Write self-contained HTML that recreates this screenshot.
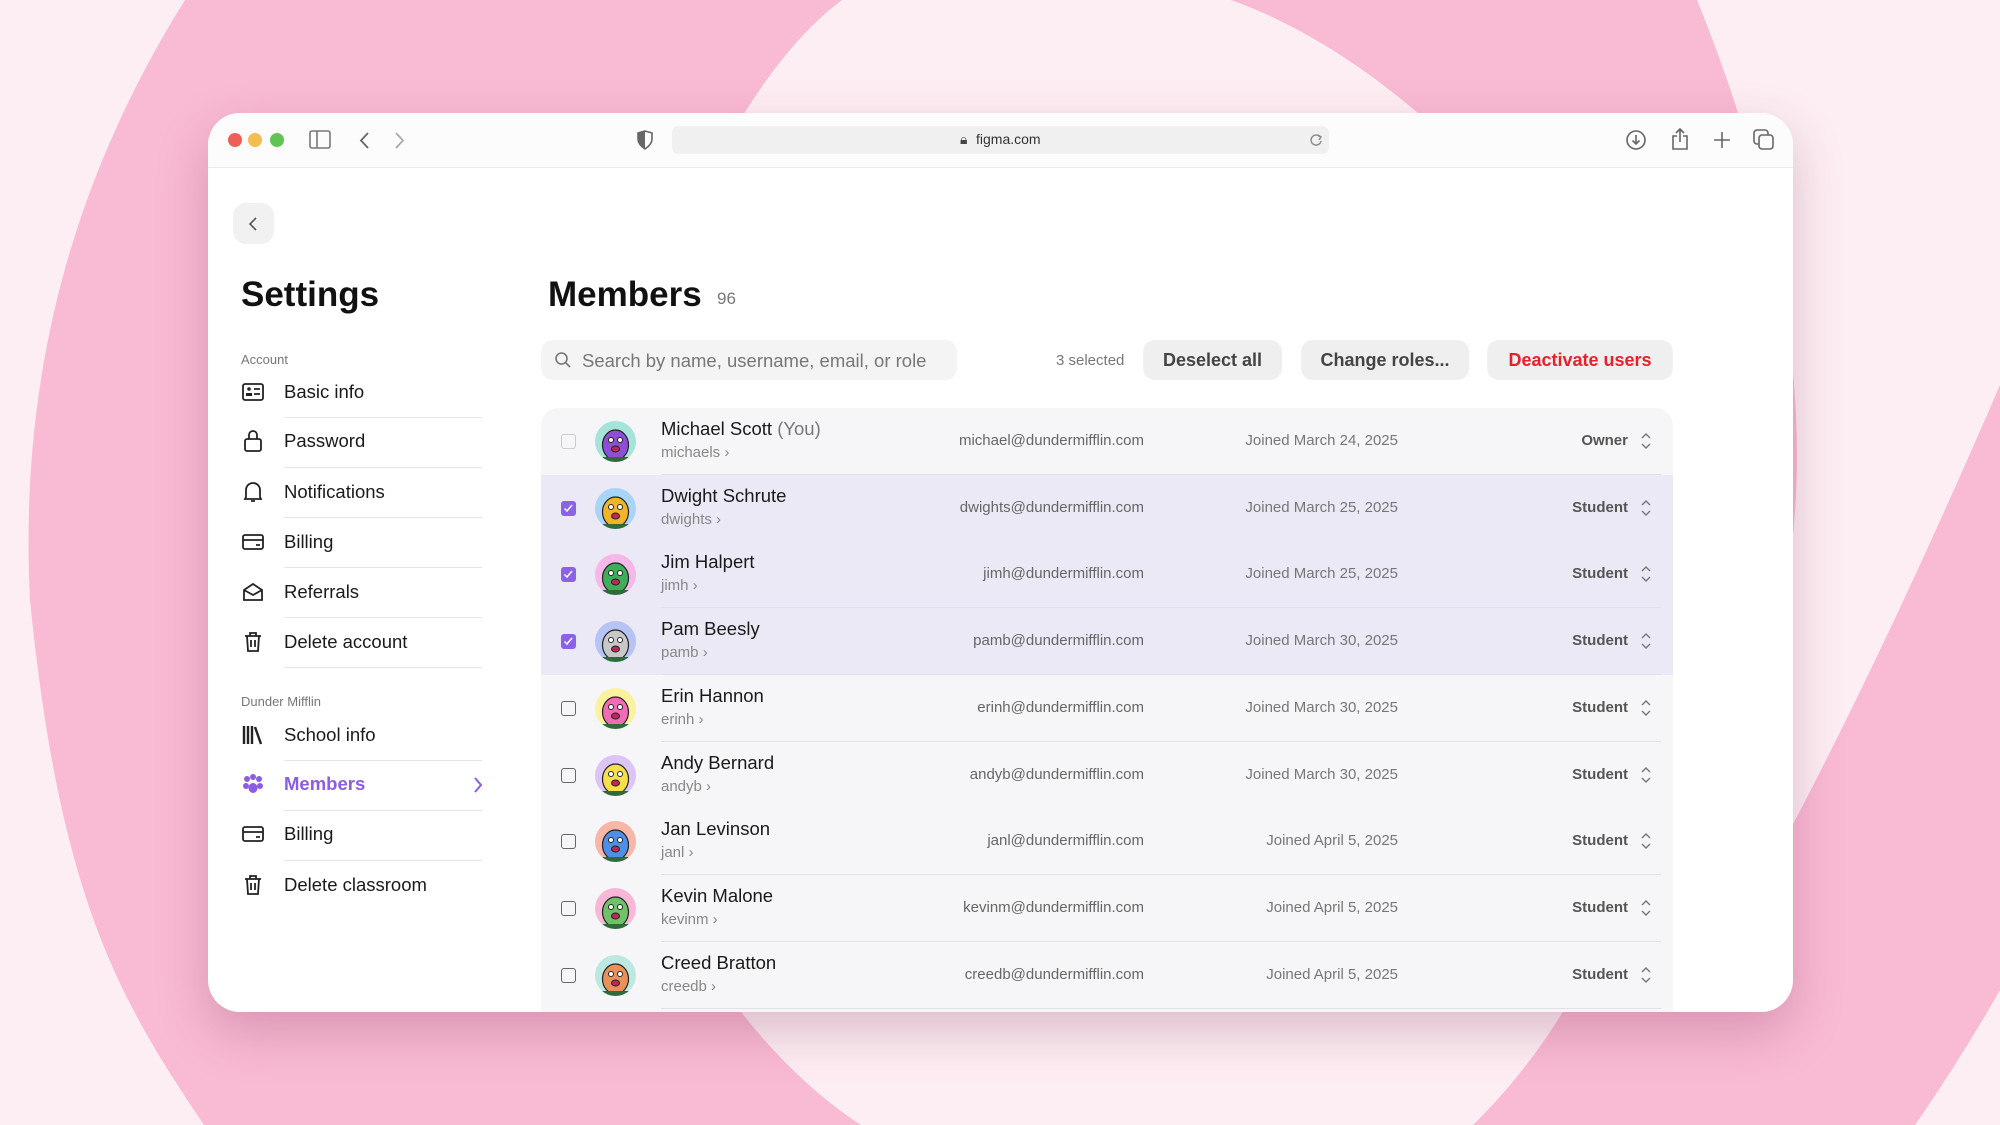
<!DOCTYPE html>
<html><head><meta charset="utf-8"><style>
*{margin:0;padding:0;box-sizing:border-box}
body{width:2000px;height:1125px;overflow:hidden;background:#fdeef3;font-family:"Liberation Sans",sans-serif;position:relative}
.a{position:absolute}
.win{position:absolute;left:208px;top:113px;width:1585px;height:899px;background:#fff;border-radius:32px;overflow:hidden;box-shadow:0 20px 50px rgba(120,40,80,.25)}
.tb{position:absolute;left:0;top:0;width:100%;height:55px;background:#fcfcfc;border-bottom:1px solid #ececec}
.dot{position:absolute;top:20px;width:14px;height:14px;border-radius:50%}
.side{font-size:18.5px;color:#1a1a1a}
.item{position:absolute;left:76px;height:24px;line-height:24px}
.sep{position:absolute;left:76px;width:198px;height:1px;background:#e6e6e6}
.ic{position:absolute;left:33px;width:24px;height:24px}
.btn{position:absolute;top:227px;height:40px;border-radius:12px;background:#efefef;font-size:18px;font-weight:bold;line-height:40px;text-align:center;color:#444}
.row{position:absolute;left:333px;width:1132px;height:67px}
.row .cb{position:absolute;left:20px;top:26px;width:15px;height:15px;border:1.6px solid #666;border-radius:3px}
.row .cb.on{background:#8b62e8;border-color:#8b62e8}
.row .av{position:absolute;left:54px;top:13px;width:41px;height:41px;border-radius:50%;overflow:hidden}
.row .nm{position:absolute;left:120px;top:10px;font-size:18.5px;color:#1a1a1a}
.row .un{position:absolute;left:120px;top:36px;font-size:15px;color:#888}
.row .em{position:absolute;right:529px;top:24px;font-size:15px;color:#666}
.row .jd{position:absolute;right:275px;top:24px;font-size:15px;color:#777}
.row .rl{position:absolute;right:45px;top:24px;font-size:15px;font-weight:bold;color:#555}
.row .ch{position:absolute;right:21px;top:24px}
.row .ln{position:absolute;left:120px;right:12px;bottom:0;height:1px;background:#e0e0e5}
</style></head><body>
<svg class="a" style="left:0;top:0" width="2000" height="1125">
<path d="M185 0 L1697 0 C1770 180 1815 380 1790 560 L1790 830 Q1890 640 2000 385 L2000 990 Q1960 1060 1915 1125 L204 1125 C120 1000 60 900 30 600 C20 400 60 200 185 0 Z" fill="#f9bad3"/>
<path d="M842 0 C720 90 590 380 610 680 C630 900 760 1060 861 1125 L1473 1125 C1600 1000 1690 800 1650 500 C1610 260 1400 60 1231 0 Z" fill="#fdeef3"/>
</svg>
<div class="win">
<div class="tb">
<div class="dot" style="left:20px;background:#ee5f57"></div>
<div class="dot" style="left:40px;background:#f4bd4f"></div>
<div class="dot" style="left:62px;background:#5fc454"></div>
<svg class="a" style="left:101px;top:17px" width="22" height="20"><rect x="1" y="1" width="20" height="17" rx="2" fill="none" stroke="#777" stroke-width="1.6"/><line x1="8" y1="1" x2="8" y2="18" stroke="#777" stroke-width="1.6"/></svg>
<svg class="a" style="left:150px;top:18px" width="14" height="20"><path d="M10 2 L3 9.5 L10 17" fill="none" stroke="#666" stroke-width="1.8"/></svg>
<svg class="a" style="left:184px;top:18px" width="14" height="20"><path d="M4 2 L11 9.5 L4 17" fill="none" stroke="#aaa" stroke-width="1.8"/></svg>
<svg class="a" style="left:429px;top:17px" width="16" height="20"><path d="M8 1 L15 3 V9 C15 14 11 17 8 19 C5 17 1 14 1 9 V3 Z" fill="none" stroke="#666" stroke-width="1.6"/><path d="M8 1 L1 3 V9 C1 14 5 17 8 19 Z" fill="#666"/></svg>
<div class="a" style="left:464px;top:13px;width:657px;height:28px;background:#f0f0f0;border-radius:7px"></div>
<div class="a" style="left:752px;top:18px;font-size:14px;color:#444">🔒︎</div>
<div class="a" style="left:768px;top:18px;font-size:14px;color:#333">figma.com</div>
<svg class="a" style="left:1101px;top:20px" width="14" height="14"><path d="M11 4 A5 5 0 1 0 12 8" fill="none" stroke="#888" stroke-width="1.4"/><path d="M9 2 L12 4 L10 7" fill="none" stroke="#888" stroke-width="1.4"/></svg>
<svg class="a" style="left:1417px;top:16px" width="22" height="22"><circle cx="11" cy="11" r="9" fill="none" stroke="#666" stroke-width="1.6"/><path d="M11 6 V15 M7.5 11.5 L11 15 L14.5 11.5" fill="none" stroke="#666" stroke-width="1.6"/></svg>
<svg class="a" style="left:1462px;top:14px" width="20" height="24"><path d="M7 9 H3 V22 H17 V9 H13 M10 15 V2 M6 6 L10 2 L14 6" fill="none" stroke="#666" stroke-width="1.6"/></svg>
<svg class="a" style="left:1504px;top:17px" width="20" height="20"><path d="M10 2 V18 M2 10 H18" stroke="#666" stroke-width="1.6"/></svg>
<svg class="a" style="left:1545px;top:16px" width="22" height="22"><rect x="1" y="1" width="14" height="14" rx="3" fill="none" stroke="#666" stroke-width="1.6"/><rect x="6" y="6" width="14" height="14" rx="3" fill="#fcfcfc" stroke="#666" stroke-width="1.6"/></svg>
</div>
<div class="a" style="left:25px;top:90px;width:41px;height:41px;border-radius:13px;background:#f1f1f1"></div>
<svg class="a" style="left:39px;top:103px" width="12" height="16"><path d="M9 2 L3 8 L9 14" fill="none" stroke="#555" stroke-width="1.6"/></svg>
<div class="a" style="left:33px;top:162px;font-size:35px;font-weight:bold;color:#111">Settings</div>
<div class="a" style="left:340px;top:162px;font-size:35px;font-weight:bold;color:#111">Members</div>
<div class="a" style="left:509px;top:176px;font-size:17px;color:#777">96</div>
<div class="side">
<div class="a" style="left:33px;top:239px;font-size:13px;color:#777">Account</div>
<div class="item" style="top:267px">Basic info</div><div class="sep" style="top:304px"></div>
<div class="item" style="top:316px">Password</div><div class="sep" style="top:354px"></div>
<div class="item" style="top:367px">Notifications</div><div class="sep" style="top:404px"></div>
<div class="item" style="top:417px">Billing</div><div class="sep" style="top:454px"></div>
<div class="item" style="top:467px">Referrals</div><div class="sep" style="top:504px"></div>
<div class="item" style="top:517px">Delete account</div><div class="sep" style="top:554px"></div>
<div class="a" style="left:33px;top:581px;font-size:13px;color:#777">Dunder Mifflin</div>
<div class="item" style="top:610px">School info</div><div class="sep" style="top:647px"></div>
<div class="item" style="top:659px;color:#8b5ce6;font-weight:bold">Members</div><div class="sep" style="top:697px"></div>
<div class="item" style="top:709px">Billing</div><div class="sep" style="top:747px"></div>
<div class="item" style="top:760px">Delete classroom</div>
</div>
<svg class="ic" style="top:267px"><rect x="2" y="4" width="20" height="16" rx="2" fill="none" stroke="#222" stroke-width="1.8"/><circle cx="8" cy="9" r="1.8" fill="#222"/><rect x="5" y="13" width="6" height="3" fill="#222"/><path d="M13 9 H19 M13 14 H19" stroke="#222" stroke-width="1.8"/></svg>
<svg class="ic" style="top:316px"><rect x="4" y="10" width="16" height="12" rx="2" fill="none" stroke="#222" stroke-width="1.8"/><path d="M8 10 V6 A4 4 0 0 1 16 6 V10" fill="none" stroke="#222" stroke-width="1.8"/></svg>
<svg class="ic" style="top:367px"><path d="M5 17 V10 A7 7 0 0 1 19 10 V17 L20 19 H4 Z M10 21 H14" fill="none" stroke="#222" stroke-width="1.8"/></svg>
<svg class="ic" style="top:417px"><rect x="2" y="5" width="20" height="14" rx="2" fill="none" stroke="#222" stroke-width="1.8"/><path d="M2 10 H22 M15 15 H19" stroke="#222" stroke-width="1.8"/></svg>
<svg class="ic" style="top:467px"><path d="M3 10 L12 4 L21 10 V20 H3 Z M3 10 L12 15 L21 10" fill="none" stroke="#222" stroke-width="1.8"/></svg>
<svg class="ic" style="top:517px"><path d="M4 6 H20 M9 6 V3 H15 V6 M6 6 L7 21 H17 L18 6 M10 10 V17 M14 10 V17" fill="none" stroke="#222" stroke-width="1.8"/></svg>
<svg class="ic" style="top:610px"><path d="M3 3 V21 M7 3 V21 M11 3 V21 M14 4 L20 21" stroke="#222" stroke-width="2.4" fill="none"/></svg>
<svg class="ic" style="top:659px"><circle cx="6" cy="7" r="3" fill="#8b5ce6"/><circle cx="12" cy="5" r="3" fill="#8b5ce6"/><circle cx="18" cy="7" r="3" fill="#8b5ce6"/><circle cx="5" cy="14" r="3" fill="#8b5ce6"/><circle cx="19" cy="14" r="3" fill="#8b5ce6"/><ellipse cx="12" cy="16" rx="4.5" ry="5" fill="#8b5ce6"/></svg>
<svg class="a" style="left:264px;top:663px" width="12" height="18"><path d="M3 2 L9 9 L3 16" fill="none" stroke="#8b5ce6" stroke-width="2"/></svg>
<svg class="ic" style="top:709px"><rect x="2" y="5" width="20" height="14" rx="2" fill="none" stroke="#222" stroke-width="1.8"/><path d="M2 10 H22 M15 15 H19" stroke="#222" stroke-width="1.8"/></svg>
<svg class="ic" style="top:760px"><path d="M4 6 H20 M9 6 V3 H15 V6 M6 6 L7 21 H17 L18 6 M10 10 V17 M14 10 V17" fill="none" stroke="#222" stroke-width="1.8"/></svg>

<div class="a" style="left:333px;top:227px;width:416px;height:40px;border-radius:12px;background:#f4f4f4"></div>
<svg class="a" style="left:346px;top:238px" width="18" height="18"><circle cx="7.5" cy="7.5" r="5.5" fill="none" stroke="#777" stroke-width="1.6"/><path d="M11.5 11.5 L16 16" stroke="#777" stroke-width="1.6"/></svg>
<div class="a" style="left:374px;top:237px;font-size:18.5px;color:#777">Search by name, username, email, or role</div>
<div class="a" style="left:848px;top:239px;font-size:15px;color:#777">3 selected</div>
<div class="btn" style="left:935px;width:139px">Deselect all</div>
<div class="btn" style="left:1093px;width:168px">Change roles...</div>
<div class="btn" style="left:1279px;width:186px;color:#e8202a">Deactivate users</div>

<div class="a" style="left:333px;top:295px;width:1132px;height:620px;border-radius:18px 18px 0 0;background:#f6f6f8"></div>
<div id="rows"></div>
</div>
<script>
const d=[
["Michael Scott","michaels","michael@dundermifflin.com","Joined March 24, 2025","Owner",0,"#a6e3d9","#8c4fd6"],
["Dwight Schrute","dwights","dwights@dundermifflin.com","Joined March 25, 2025","Student",1,"#a8d4f5","#f0b429"],
["Jim Halpert","jimh","jimh@dundermifflin.com","Joined March 25, 2025","Student",1,"#f5b8e8","#3fae5a"],
["Pam Beesly","pamb","pamb@dundermifflin.com","Joined March 30, 2025","Student",1,"#b5c4f5","#c8c8c8"],
["Erin Hannon","erinh","erinh@dundermifflin.com","Joined March 30, 2025","Student",0,"#fbf2a0","#f06cb4"],
["Andy Bernard","andyb","andyb@dundermifflin.com","Joined March 30, 2025","Student",0,"#dcc4f5","#f5e04a"],
["Jan Levinson","janl","janl@dundermifflin.com","Joined April 5, 2025","Student",0,"#f7b7a8","#4f8fe8"],
["Kevin Malone","kevinm","kevinm@dundermifflin.com","Joined April 5, 2025","Student",0,"#f7b8d8","#6fc26a"],
["Creed Bratton","creedb","creedb@dundermifflin.com","Joined April 5, 2025","Student",0,"#bde8e0","#e8915a"]];
let h="";
d.forEach((r,i)=>{const top=295+i*66.7;const bg=r[5]?"#ebe9f5":"#f6f6f8";
h+=`<div class="row" style="top:${top}px;background:${bg};${i==0?'border-radius:18px 18px 0 0;':''}">
<div class="cb ${r[5]?'on':''}" style="${i==0?'border-color:#ccc':''}">${r[5]?'<svg width="12" height="12" style="position:absolute;left:0;top:0"><path d="M2.5 6.5 L5 9 L10 3" fill="none" stroke="#fff" stroke-width="1.5"/></svg>':''}</div>
<div class="av" style="background:${r[6]}"><svg width="41" height="41"><ellipse cx="20.5" cy="24" rx="13" ry="15" fill="${r[7]}" stroke="#222" stroke-width="1.2"/><circle cx="16" cy="19" r="2.5" fill="#fff" stroke="#222"/><circle cx="25" cy="19" r="2.5" fill="#fff" stroke="#222"/><ellipse cx="20.5" cy="28" rx="4" ry="3" fill="#c0265a" stroke="#222"/><rect x="6" y="36" width="29" height="6" fill="#2e6b3a"/></svg></div>
<div class="nm">${r[0]}${i==0?' <span style="color:#777">(You)</span>':''}</div>
<div class="un">${r[1]} ›</div>
<div class="em">${r[2]}</div><div class="jd">${r[3]}</div><div class="rl">${r[4]}</div>
<svg class="ch" width="12" height="18"><path d="M2 6 L6 2 L10 6 M2 12 L6 16 L10 12" fill="none" stroke="#777" stroke-width="1.4"/></svg>
<div class="ln"></div></div>`});
document.getElementById("rows").innerHTML=h;
</script>
</body></html>
